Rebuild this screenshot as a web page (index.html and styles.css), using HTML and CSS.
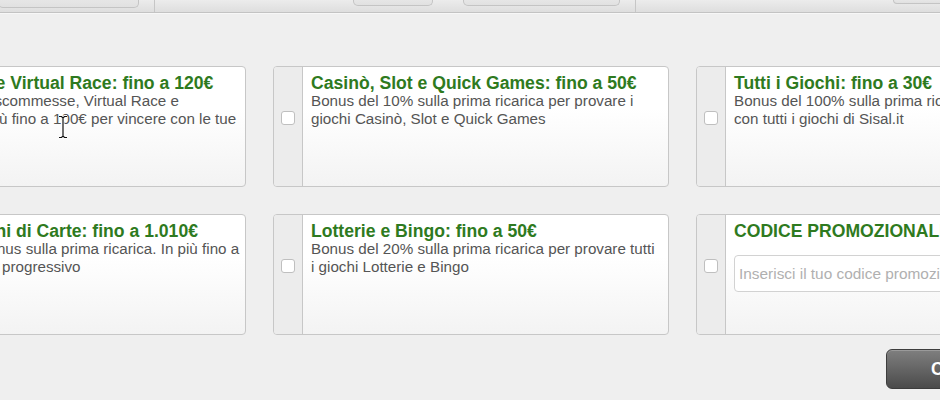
FILE: index.html
```html
<!DOCTYPE html>
<html lang="it">
<head>
<meta charset="utf-8">
<title>Bonus di benvenuto</title>
<link rel="stylesheet" href="styles.css">
</head>
<body>
<header class="toolbar">
  <div class="tb-btn tb-a"></div>
  <div class="tb-sep tb-s1"></div>
  <div class="tb-btn tb-b"></div>
  <div class="tb-btn tb-c"></div>
  <div class="tb-sep tb-s2"></div>
  <div class="tb-btn tb-d"></div>
</header>

<main class="panel">
  <div class="offers">
    <label class="card">
      <span class="strip"><span class="check"></span></span>
      <span class="content">
        <span class="title">Scommesse e Virtual Race: fino a 120€</span>
        <span class="desc">Bonus del 50% scommesse, Virtual Race e sull'Ippica e in più fino a 100€ per vincere con le tue scommesse</span>
      </span>
    </label>
    <label class="card">
      <span class="strip"><span class="check"></span></span>
      <span class="content">
        <span class="title">Casinò, Slot e Quick Games: fino a 50€</span>
        <span class="desc">Bonus del 10% sulla prima ricarica per provare i giochi Casinò, Slot e Quick Games</span>
      </span>
    </label>
    <label class="card">
      <span class="strip"><span class="check"></span></span>
      <span class="content">
        <span class="title">Tutti i Giochi: fino a 30€</span>
        <span class="desc">Bonus del 100% sulla prima ricarica per giocare con&nbsp;tutti i giochi di Sisal.it</span>
      </span>
    </label>
    <label class="card">
      <span class="strip"><span class="check"></span></span>
      <span class="content">
        <span class="title">Poker e Giochi di Carte: fino a 1.010€</span>
        <span class="desc">Fino a 10€ di bonus sulla prima ricarica. In più fino a 1.000€ di Bonus progressivo</span>
      </span>
    </label>
    <label class="card">
      <span class="strip"><span class="check"></span></span>
      <span class="content">
        <span class="title">Lotterie e Bingo: fino a 50€</span>
        <span class="desc">Bonus del 20% sulla prima ricarica per provare tutti i&nbsp;giochi Lotterie e Bingo</span>
      </span>
    </label>
    <div class="card">
      <span class="strip"><span class="check"></span></span>
      <span class="content">
        <span class="title">CODICE PROMOZIONALE</span>
        <input class="promo" type="text" placeholder="Inserisci il tuo codice promozionale">
      </span>
    </div>
  </div>
  <div class="actions">
    <button class="btn" type="button">CONFERMA</button>
  </div>
</main>

<svg class="cursor" width="12" height="24" viewBox="0 0 12 24" aria-hidden="true">
  <path d="M2 1.5h2.5l1.5 1.5 1.5-1.5h2.5M6 3v18M2 22.5h2.5l1.5-1.5 1.5 1.5h2.5" fill="none" stroke="#fff" stroke-width="3"/>
  <path d="M2 1.5h2.5l1.5 1.5 1.5-1.5h2.5M6 3v18M2 22.5h2.5l1.5-1.5 1.5 1.5h2.5" fill="none" stroke="#111" stroke-width="1.2"/>
</svg>
</body>
</html>
```

FILE: styles.css
```css
html, body {
  margin: 0;
  padding: 0;
  overflow: hidden;
  height: 100%;
}

body {
  background: #efefef;
  font-family: "Liberation Sans", Arial, Helvetica, sans-serif;
  position: relative;
}

/* top toolbar */
.toolbar {
  display: flex;
  align-items: flex-start;
  height: 12px;
  border-bottom: 1px solid #c3c3c3;
  background: linear-gradient(#ececec, #dedede);
  box-shadow: 0 1px 0 #f7f7f7;
  overflow: hidden;
}

.tb-btn {
  flex: none;
  box-sizing: border-box;
  border: 1px solid #c4c4c4;
  border-top: none;
  border-radius: 0 0 5px 5px;
  background: linear-gradient(#e6e6e6, #e1e1e1);
}

.tb-a { width: 141px; height: 8px; margin-left: -2px; }
.tb-b { width: 80px; height: 6px; margin-left: 198px; }
.tb-c { width: 157px; height: 6px; margin-left: 30px; }
.tb-d { width: 80px; height: 4px; margin-left: 257px; }

.tb-sep {
  flex: none;
  width: 1px;
  height: 12px;
  background: #c6c6c6;
}
.tb-s1 { margin-left: 15px; }
.tb-s2 { margin-left: 15px; }

/* offers */
.panel {
  width: 1242px;
  margin: 53px 0 0 -150px;
}

.offers {
  display: grid;
  grid-template-columns: repeat(3, 396px);
  column-gap: 27px;
  row-gap: 27px;
}

.card {
  display: flex;
  box-sizing: border-box;
  height: 121px;
  border: 1px solid #c7c7c7;
  border-radius: 4px;
  background: linear-gradient(#ffffff 35%, #f3f3f3);
  overflow: hidden;
  cursor: pointer;
}

.strip {
  flex: none;
  display: flex;
  justify-content: center;
  align-items: flex-start;
  width: 28px;
  padding-top: 44px;
  background: #ececec;
  border-right: 1px solid #c7c7c7;
}

.check {
  display: block;
  box-sizing: border-box;
  width: 14px;
  height: 14px;
  border: 1px solid #bfbfbf;
  border-radius: 3px;
  background: #fff;
}

.content {
  flex: 1;
  min-width: 0;
  display: flex;
  flex-direction: column;
  padding: 7px 0 0 8px;
}

.title {
  display: block;
  font-weight: bold;
  font-size: 17.6px;
  line-height: 18px;
  color: #2e7a20;
  white-space: nowrap;
}

.desc {
  display: block;
  font-size: 15.2px;
  line-height: 18px;
  color: #555;
}

.promo {
  box-sizing: border-box;
  width: 360px;
  height: 37px;
  margin: 15px 0 0 0;
  padding: 0 4px;
  border: 1px solid #d2d2d2;
  border-radius: 4px;
  background: #fff;
  font-family: "Liberation Sans", Arial, Helvetica, sans-serif;
  font-size: 15.4px;
  color: #444;
  outline: none;
}
.promo::placeholder {
  color: #b0b0b0;
}

/* actions */
.actions {
  display: flex;
  justify-content: flex-end;
  margin-top: 14px;
}

.btn {
  box-sizing: border-box;
  width: 206px;
  height: 40px;
  padding: 0 0 0 44px;
  text-align: left;
  border: 1px solid #3d3d3d;
  border-radius: 6px;
  background: linear-gradient(#7f7f7f, #4b4b4b);
  box-shadow: inset 0 1px 0 #9a9a9a;
  color: #fff;
  font-family: "Liberation Sans", Arial, Helvetica, sans-serif;
  font-weight: bold;
  font-size: 17.6px;
}

/* mouse pointer overlay captured in the screenshot */
.cursor {
  position: absolute;
  left: 57px;
  top: 115px;
  pointer-events: none;
}
```
